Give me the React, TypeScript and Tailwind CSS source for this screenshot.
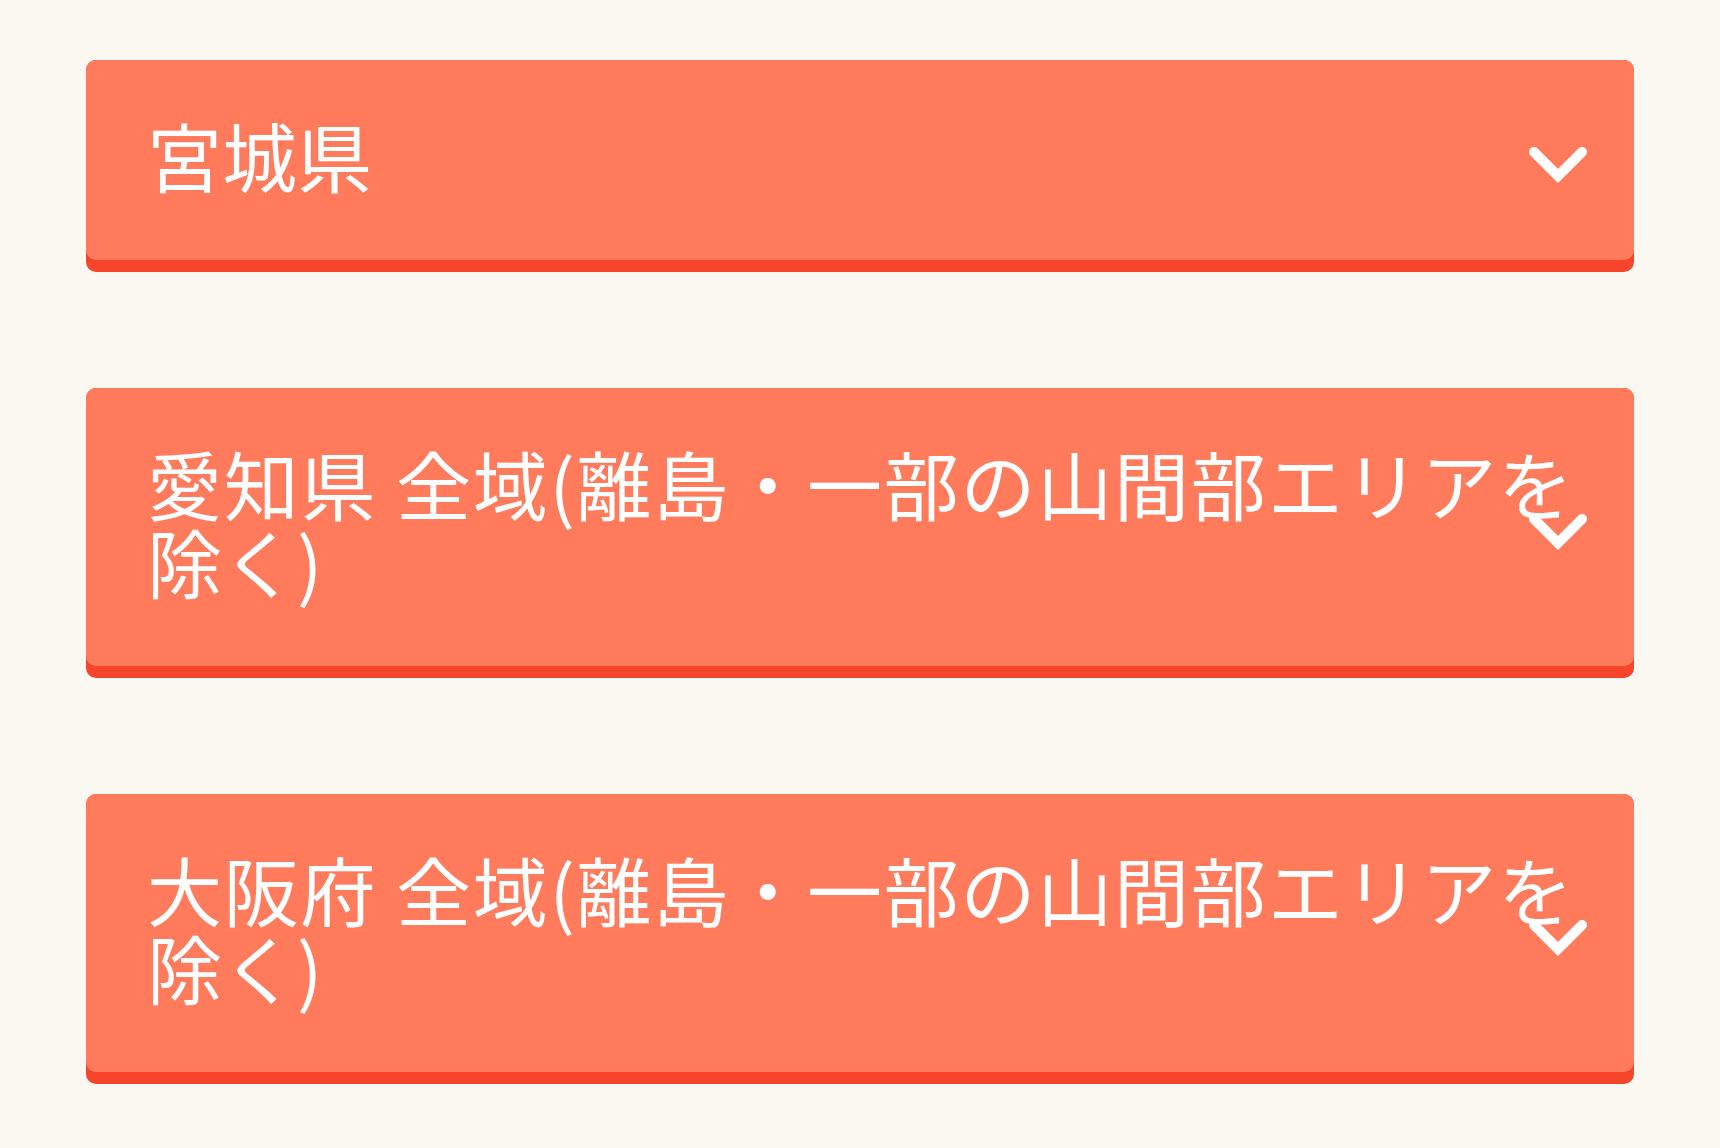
import React from 'react'

const areas = [
  '宮城県',
  '愛知県 全域(離島・一部の山間部エリアを除く)',
  '大阪府 全域(離島・一部の山間部エリアを除く)',
]

function Chevron() {
  return (
    <svg
      viewBox="0 0 60 40"
      className="pointer-events-none absolute right-[46px] top-1/2 h-[40px] w-[60px] -translate-y-1/2 blur-[0.4px]"
      fill="none"
      aria-hidden
    >
      <polyline
        points="6,6 30,30 54,6"
        stroke="#ffffff"
        strokeWidth="10"
        strokeLinecap="round"
        strokeLinejoin="miter"
      />
    </svg>
  )
}

function AreaCard({ name }: { name: string }) {
  return (
    <button
      type="button"
      className="relative block w-full rounded-[10px] bg-[#f6452b] pb-[12px] text-left"
    >
      <div className="rounded-[10px] bg-[#ff7b5c] px-[61px] pt-[56px] pb-[66px]">
        <span className="block text-justify text-[75px] leading-[78px] font-normal text-white">{name}</span>
      </div>
      <Chevron />
    </button>
  )
}

export default function App() {
  return (
    <div
      className="min-h-screen bg-[#fbf8f1] px-[86px] pt-[60px] pb-[60px]"
      style={{ fontFamily: '"Noto Sans CJK JP", "Noto Sans", sans-serif' }}
    >
      <div className="flex flex-col gap-[116px]">
        {areas.map(a => (
          <AreaCard key={a} name={a} />
        ))}
      </div>
    </div>
  )
}
